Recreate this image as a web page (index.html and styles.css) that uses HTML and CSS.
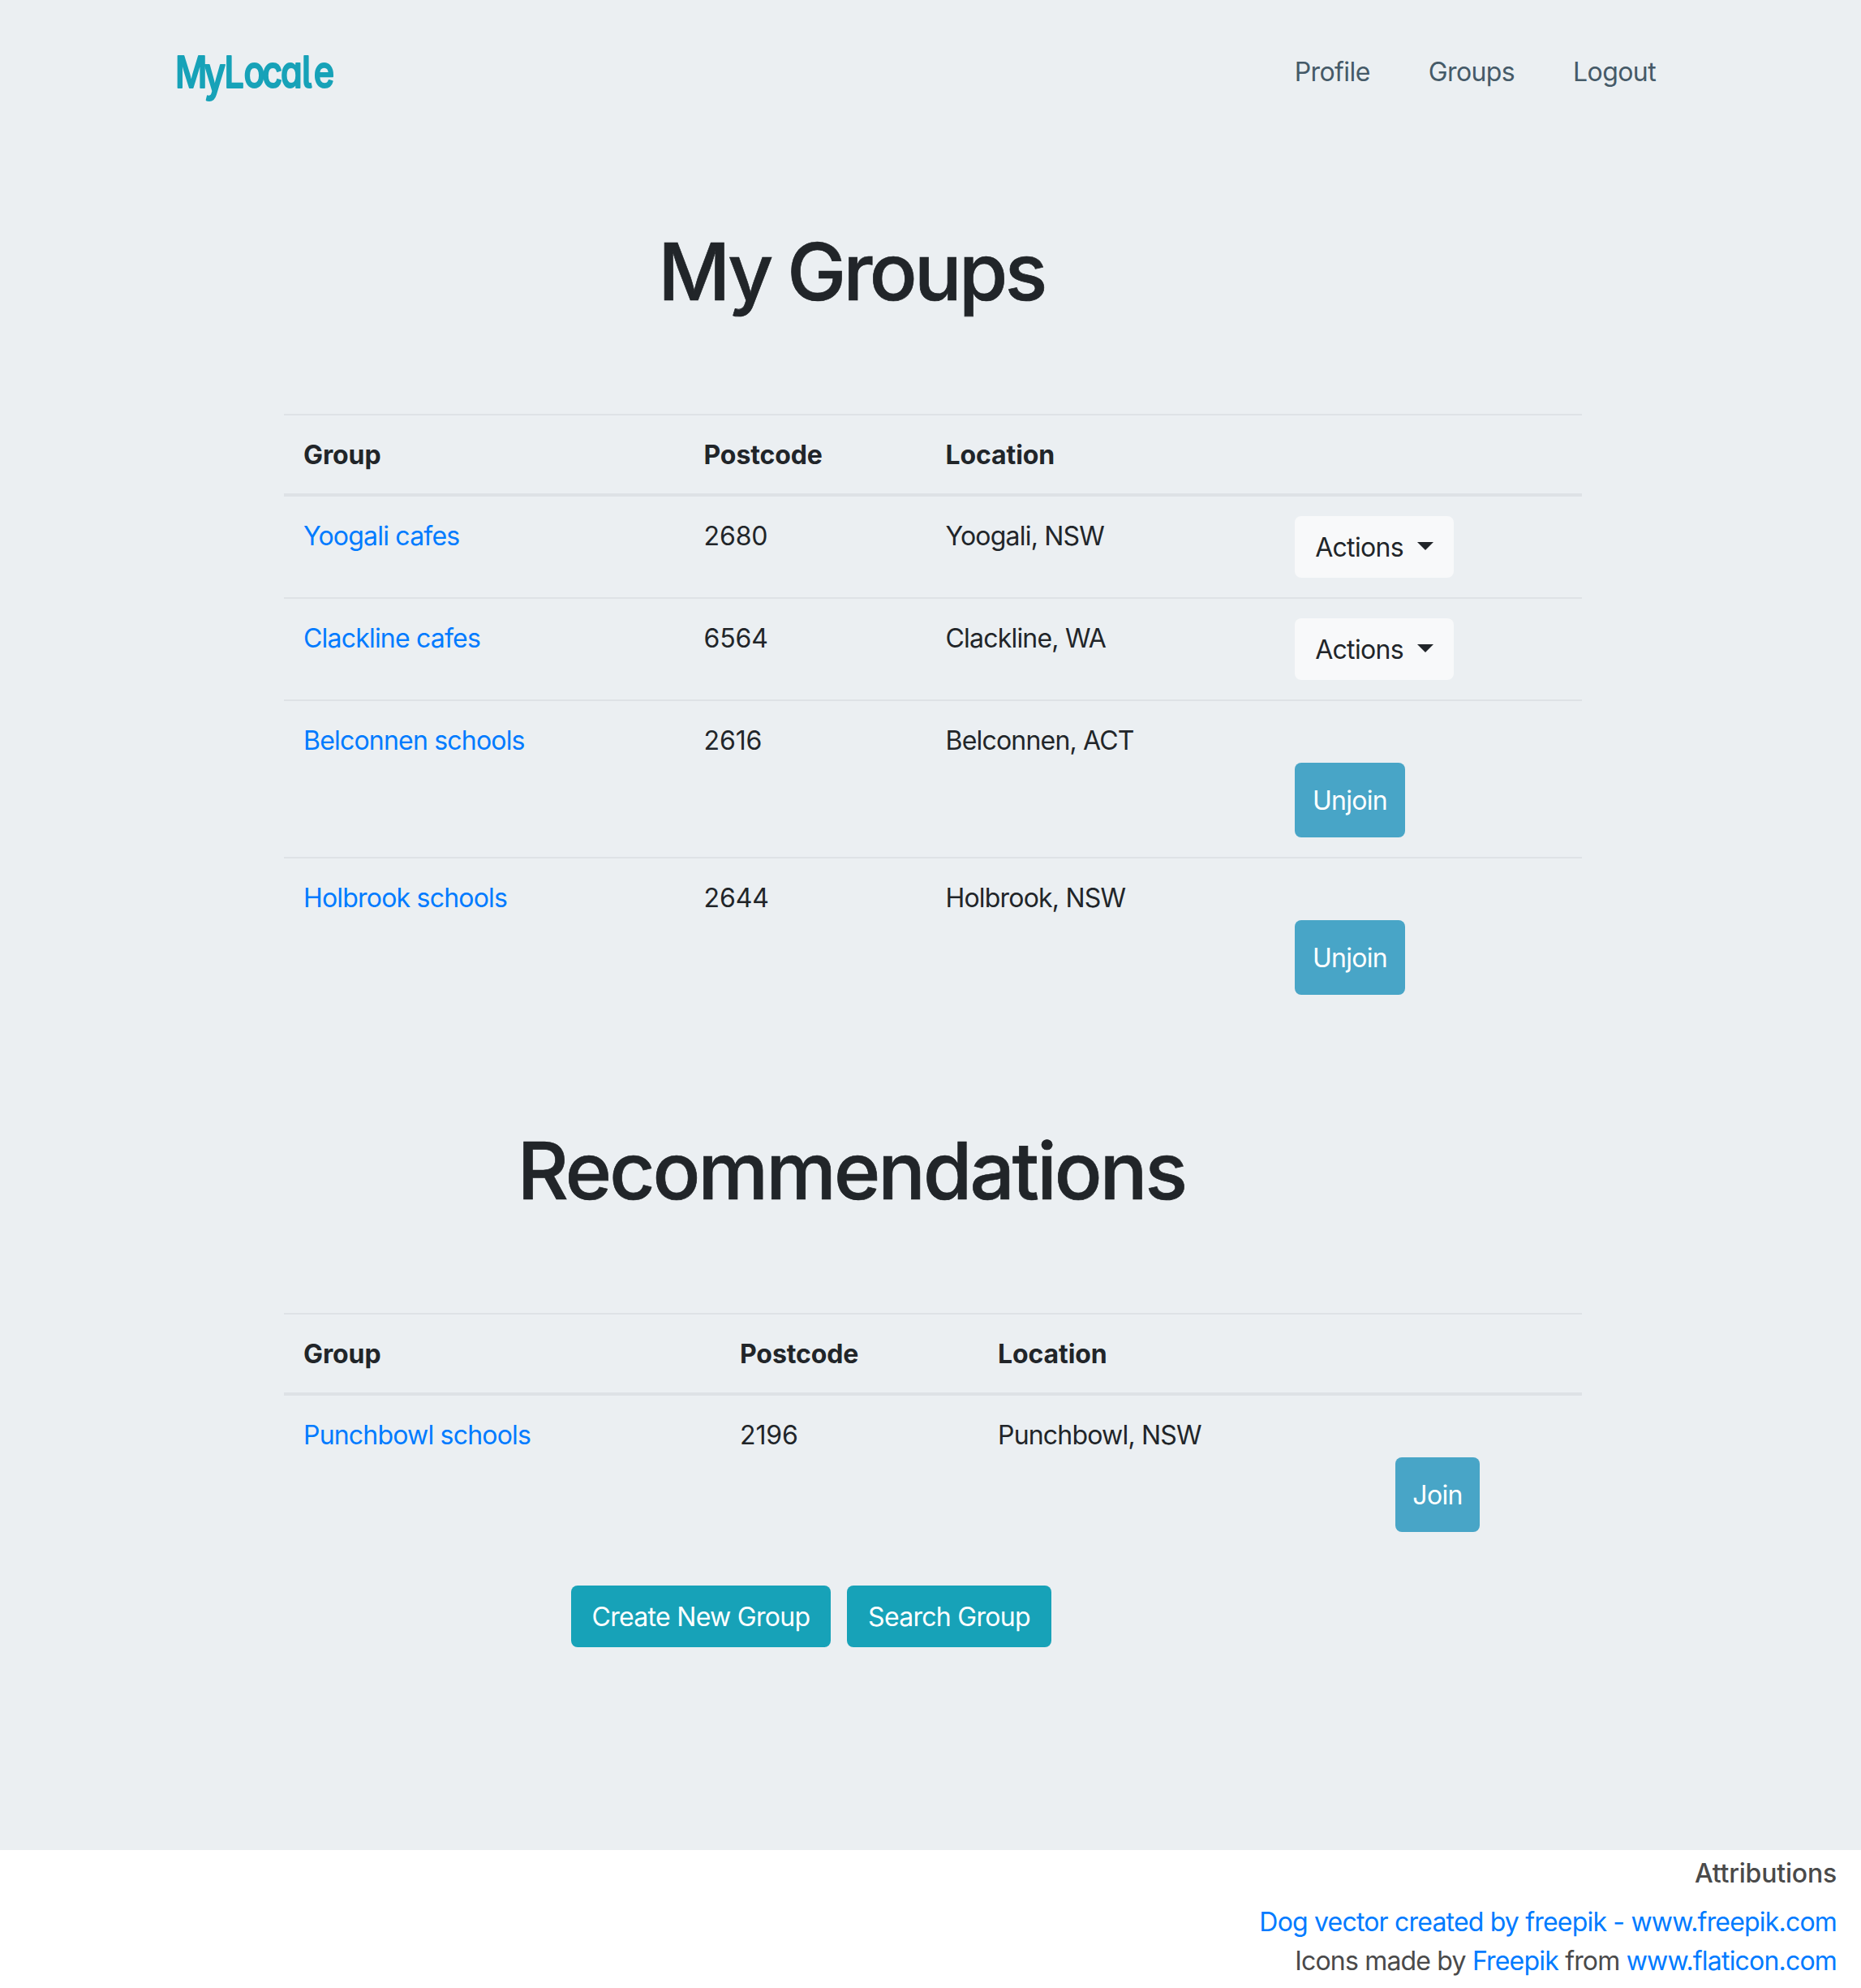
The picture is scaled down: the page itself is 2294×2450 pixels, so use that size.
FILE: index.html
```html
<!DOCTYPE html>
<html lang="en">
<head>
<meta charset="utf-8">
<title>MyLocale</title>
<link rel="stylesheet" href="styles.css">
</head>
<body>
<main class="page">
  <header class="navbar">
    <a class="brand" href="#" aria-label="MyLocale">
      <svg class="brand-mark" width="280" height="110" viewBox="0 0 280 110"><text transform="translate(0 68) scale(.8 1)" x="2.500 47 78 108 136.500 165 197.500 216" y="0 4 0 0 0 0 0 0">M<tspan class="brand-y">y</tspan>Locale</text></svg>
    </a>
    <nav class="nav-links">
      <a href="#">Profile</a>
      <a href="#">Groups</a>
      <a href="#">Logout</a>
    </nav>
  </header>

  <section class="section">
    <h1 class="title">My Groups</h1>
    <table class="table groups">
      <colgroup><col class="c-group"><col class="c-postcode"><col class="c-location"><col></colgroup>
      <thead><tr><th>Group</th><th>Postcode</th><th>Location</th><th></th></tr></thead>
      <tbody>
        <tr><td><a href="#">Yoogali cafes</a></td><td class="num">2680</td><td>Yoogali, NSW</td><td><button class="btn btn-light">Actions<i class="caret"></i></button></td></tr>
        <tr><td><a href="#">Clackline cafes</a></td><td class="num">6564</td><td>Clackline, WA</td><td><button class="btn btn-light">Actions<i class="caret"></i></button></td></tr>
        <tr><td><a href="#">Belconnen schools</a></td><td class="num">2616</td><td>Belconnen, ACT</td><td><button class="btn btn-join">Unjoin</button></td></tr>
        <tr><td><a href="#">Holbrook schools</a></td><td class="num">2644</td><td>Holbrook, NSW</td><td><button class="btn btn-join">Unjoin</button></td></tr>
      </tbody>
    </table>
  </section>

  <section class="section">
    <h1 class="title title-rec">Recommendations</h1>
    <table class="table recommended">
      <colgroup><col class="c-group"><col class="c-postcode"><col class="c-location"><col></colgroup>
      <thead><tr><th>Group</th><th>Postcode</th><th>Location</th><th></th></tr></thead>
      <tbody>
        <tr><td><a href="#">Punchbowl schools</a></td><td class="num">2196</td><td>Punchbowl, NSW</td><td><button class="btn btn-join join">Join</button></td></tr>
      </tbody>
    </table>
  </section>

  <div class="actions">
    <button class="btn btn-info create">Create New Group</button>
    <button class="btn btn-info search">Search Group</button>
  </div>
</main>
<footer class="footer">
  <h2>Attributions</h2>
  <p><a href="#">Dog vector created by freepik - www.freepik.com</a></p>
  <p>Icons made by <a href="#">Freepik</a> from <a href="#">www.flaticon.com</a></p>
</footer>
</body>
</html>
```
FILE: styles.css
```css
* { box-sizing: border-box; }
body {
  margin: 0;
  background: #fff;
  color: #212529;
  font: 400 32px/48px Inter, "Liberation Sans", sans-serif;
  letter-spacing: -0.8px;
}
a { color: #007bff; text-decoration: none; }
.page { height: 2280px; background: #ebeff2; }

.navbar {
  display: flex;
  justify-content: space-between;
  align-items: flex-start;
  height: 180px;
  padding: 40px 253px 0 214px;
}
.brand { display: block; height: 110px; }
.brand-mark { display: block; }
.brand-mark text {
  font: 500 54px Inter, sans-serif;
  font-feature-settings: "cv11", "cv05";
  letter-spacing: 0;
  fill: #17a2b8;
  stroke: #17a2b8;
  stroke-width: 2;
  stroke-linejoin: round;
}
.brand-mark .brand-y { font-size: 58px; }
.nav-links { display: flex; gap: 72px; padding-top: 25px; letter-spacing: -0.6px; }
.nav-links a { color: #455a68; }

.section { width: 1600px; margin-left: 350px; }
.title {
  margin: 0;
  height: 330px;
  padding: 95px 201px 0 0;
  text-align: center;
  font-size: 97.500px;
  font-weight: 500;
  line-height: 120px;
  letter-spacing: -3.600px;
  word-spacing: -2px;
  -webkit-text-stroke: 0.7px #212529;
}
.title-rec { height: 368px; padding-top: 133px; letter-spacing: -2.900px; }
.table { width: 1600px; table-layout: fixed; border-spacing: 0; }
.table th, .table td { padding: 25px 24px 23px; text-align: left; vertical-align: top; }
.table td:last-child { padding: 24px; }
.table th {
  height: 102px;
  border-top: 2px solid #dee2e6;
  border-bottom: 4px solid #dee2e6;
  font-weight: 700;
  letter-spacing: -0.1px;
}
.table .num { letter-spacing: -0.1px; }
.table tbody tr + tr td { border-top: 2px solid #dee2e6; }
.groups .c-group { width: 493.500px; }
.groups .c-postcode { width: 298px; }
.groups .c-location { width: 430.500px; }
.recommended .c-group { width: 538px; }
.recommended .c-postcode { width: 318px; }
.recommended .c-location { width: 490px; }

.btn {
  display: flex;
  align-items: center;
  justify-content: center;
  height: 76px;
  padding: 2px 0 0;
  border: 0;
  border-radius: 8px;
  font: inherit;
  letter-spacing: -0.7px;
  white-space: nowrap;
}
.btn-light { width: 196px; gap: 17px; background: #f8f9fa; color: #212529; }
.caret {
  margin-bottom: 5px;
  border: 10px solid transparent;
  border-top-color: #212529;
  border-bottom: 0;
}
.btn-join { width: 136px; height: 92px; margin-top: 52px; background: #48a5c7; color: #fff; }
.join { width: 104px; }
.btn-info { background: #17a2b8; color: #fff; }
.actions { display: flex; gap: 20px; padding: 42px 0 0 704px; }
.create { width: 320px; }
.search { width: 252px; }

.footer { padding: 5px 30px 0 0; text-align: right; color: #4a4a4a; letter-spacing: -0.81px; }
.footer h2 { margin: 0 0 12px; font-size: 32px; font-weight: 500; letter-spacing: -0.2px; }
.footer p { margin: 0; }
```
